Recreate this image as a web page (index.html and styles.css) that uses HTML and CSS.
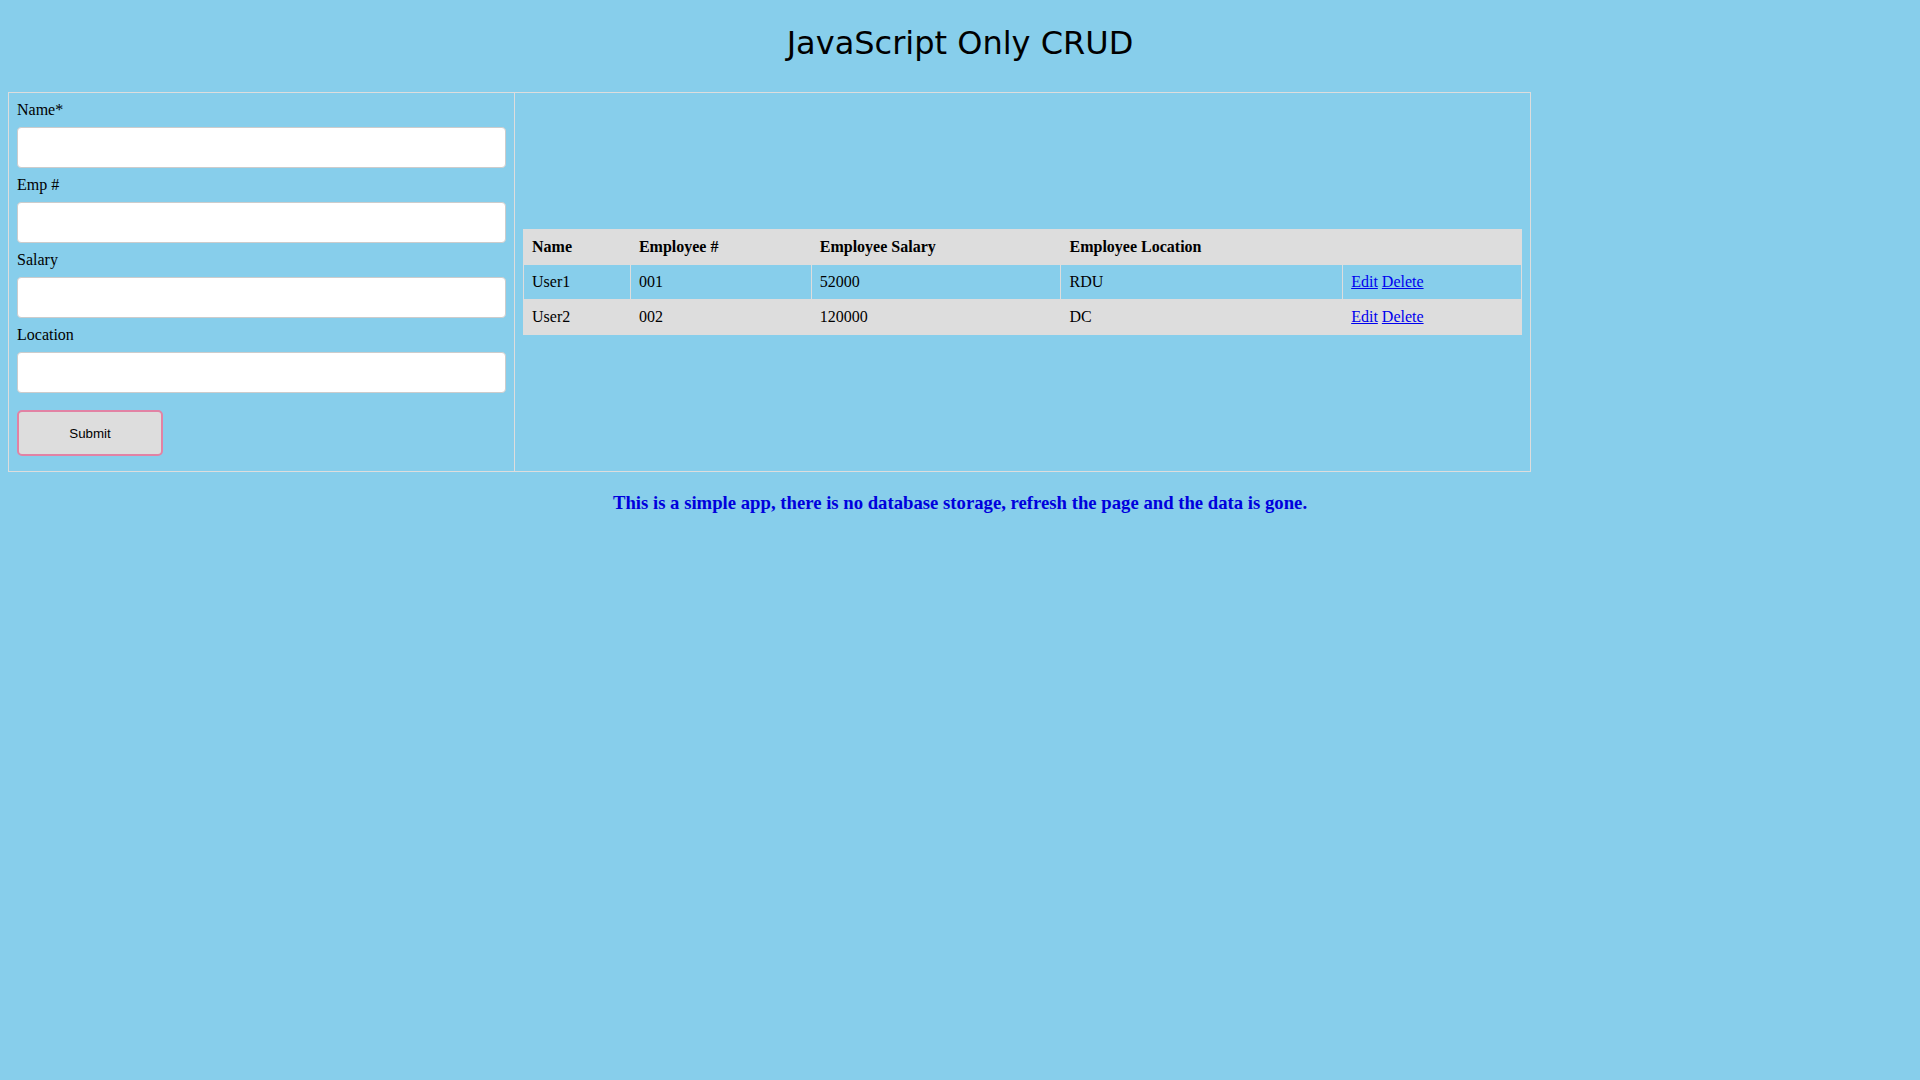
FILE: index.html
```html
<!DOCTYPE html>
<html lang="en">
<head>
<meta charset="utf-8">
<title>JavaScript Only CRUD</title>
<link rel="stylesheet" href="styles.css">
</head>
<body>
<h1 class="title">JavaScript Only CRUD</h1>
<div class="layout">
  <form class="form-panel">
    <label class="field-label" for="name">Name*</label>
    <input class="field-input" type="text" id="name">
    <label class="field-label" for="emp">Emp #</label>
    <input class="field-input" type="text" id="emp">
    <label class="field-label" for="salary">Salary</label>
    <input class="field-input" type="text" id="salary">
    <label class="field-label" for="location">Location</label>
    <input class="field-input" type="text" id="location">
    <button class="submit-btn" type="button">Submit</button>
  </form>
  <div class="list-panel">
    <table class="emp-table">
      <thead>
        <tr>
          <th class="col-name">Name</th>
          <th class="col-num">Employee #</th>
          <th class="col-salary">Employee Salary</th>
          <th class="col-loc">Employee Location</th>
          <th class="col-act"></th>
        </tr>
      </thead>
      <tbody>
        <tr>
          <td>User1</td>
          <td>001</td>
          <td>52000</td>
          <td>RDU</td>
          <td><a href="#">Edit</a> <a href="#">Delete</a></td>
        </tr>
        <tr class="alt">
          <td>User2</td>
          <td>002</td>
          <td>120000</td>
          <td>DC</td>
          <td><a href="#">Edit</a> <a href="#">Delete</a></td>
        </tr>
      </tbody>
    </table>
  </div>
</div>
<h3 class="note">This is a simple app, there is no database storage, refresh the page and the data is gone.</h3>
</body>
</html>
```
FILE: styles.css
```css
html, body {
  background: #87ceeb;
}
body {
  margin: 8px;
  font-family: "Liberation Serif", "Times New Roman", serif;
  font-size: 16px;
  color: #000;
}
.title {
  font-family: "DejaVu Sans", sans-serif;
  font-weight: normal;
  font-size: 32px;
  text-align: center;
  margin: 16px 0 30px;
}
.layout {
  display: flex;
  width: 1523px;
  border: 1px solid #dddddd;
  box-sizing: border-box;
}
.form-panel {
  width: 506px;
  box-sizing: border-box;
  padding: 8px;
  border-right: 1px solid #dddddd;
  margin: 0;
}
.field-label {
  display: block;
  line-height: 18px;
}
.field-input {
  display: block;
  width: 100%;
  height: 41px;
  box-sizing: border-box;
  margin: 8px 0;
  padding: 12px 20px;
  border: 1px solid #cccccc;
  border-radius: 4px;
  background: #fff;
  font-family: "Liberation Sans", Arial, sans-serif;
  font-size: 13.33px;
}
.submit-btn {
  display: block;
  width: 146px;
  height: 46px;
  box-sizing: border-box;
  margin: 17px 0 7px;
  border: 2px solid #e282a4;
  border-radius: 5px;
  background: #dddddd;
  font-family: "Liberation Sans", Arial, sans-serif;
  font-size: 13.33px;
  color: #000;
}
.list-panel {
  flex: 1;
  display: flex;
  align-items: center;
  padding: 8px;
}
.emp-table {
  width: 100%;
  border-collapse: collapse;
}
.emp-table th,
.emp-table td {
  border: 1px solid #dddddd;
  text-align: left;
  padding: 8px;
  line-height: 18px;
}
.emp-table thead tr,
.emp-table tr.alt {
  background: #dddddd;
}
.col-name { width: 90px; }
.col-num { width: 164px; }
.col-salary { width: 233px; }
.col-loc { width: 265px; }
.col-act { width: 162px; }
.emp-table a {
  color: #0000ee;
  text-decoration: underline;
}
.note {
  text-align: center;
  color: #0000dd;
  font-size: 18.72px;
  font-weight: bold;
  margin: 20px 0;
}
```
